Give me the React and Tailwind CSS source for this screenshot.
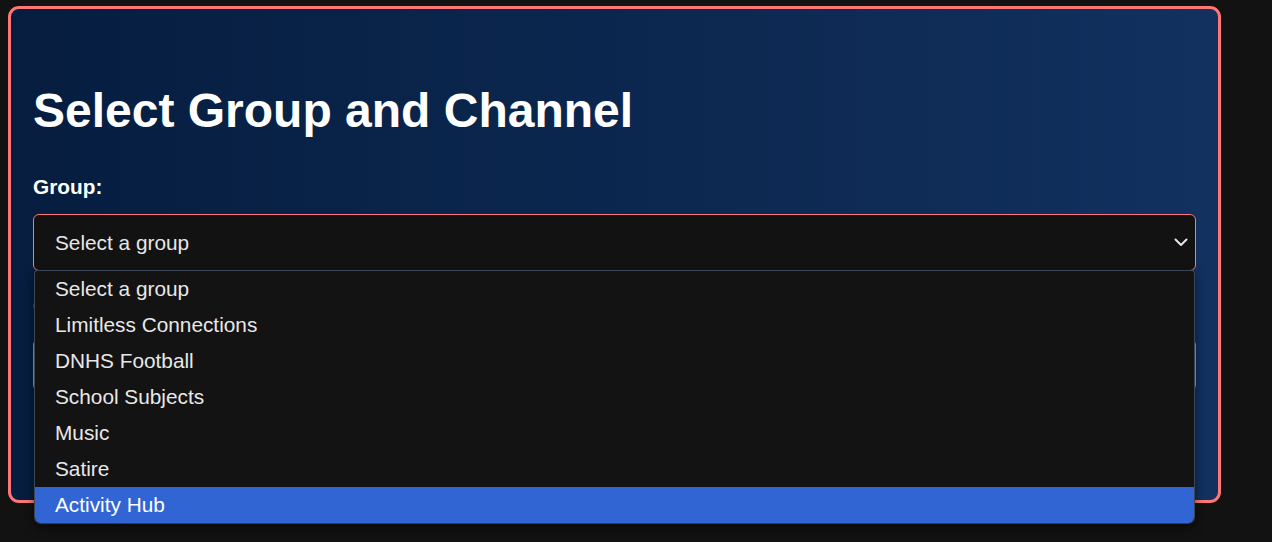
import React from "react";

const options = [
  "Select a group",
  "Limitless Connections",
  "DNHS Football",
  "School Subjects",
  "Music",
  "Satire",
  "Activity Hub",
];

function Chevron() {
  return (
    <svg width="14" height="9" viewBox="0 0 14 9" fill="none">
      <path d="M1.5 1.5 L7 7 L12.5 1.5" stroke="#e5e5e5" strokeWidth="2" strokeLinecap="round" strokeLinejoin="round" />
    </svg>
  );
}

export default function App() {
  return (
    <div
      className="min-h-[542px] w-full bg-[#121212] pl-[8px] pt-[6px]"
      style={{ fontFamily: '"Liberation Sans", Arial, sans-serif' }}
    >
      <div className="relative h-[497px] w-[1213px] rounded-[11px] border-[3px] border-[#ff7676] bg-gradient-to-r from-[#061d3f] to-[#12315f] px-[22px] pt-[78px]">
        <h1 className="m-0 text-[48px] font-bold leading-[48px] text-white">
          Select Group and Channel
        </h1>
        <label className="mt-[39px] block text-[20.8px] font-bold leading-[25px] text-white">
          Group:
        </label>
        <div className="relative mt-[15px]">
          <div className="flex h-[57px] w-[1163px] items-center justify-between rounded-[6px] border border-[#ff7676] bg-[#121212] pl-[21px] pr-[6px]">
            <span className="text-[20.8px] text-[#e6e6e6]">Select a group</span>
            <span className="mr-[1px] flex items-center">
              <Chevron />
            </span>
          </div>
          <label className="mt-[22px] block text-[20.8px] font-bold leading-[25px] text-white">
            Channel:
          </label>
          <div className="mt-[21px] h-[52px] w-[1163px] rounded-[6px] border border-[#ff7676] bg-[#121212]" />

          <div className="absolute left-[1px] top-[56px] z-10 w-[1161px] overflow-hidden rounded-b-[7px] rounded-t-[4px] border border-[#3b4656] border-b-[#3a3a3a] bg-[#131313] shadow-[0_4px_10px_rgba(0,0,0,0.5)]">
            {options.map((o, i) => (
              <div
                key={o}
                className={
                  i === options.length - 1
                    ? "flex h-[36px] items-center bg-[#3165d3] pl-[20px] text-[20.8px] text-white"
                    : "flex h-[36px] items-center pl-[20px] text-[20.8px] text-[#e8e8e8]"
                }
              >
                {o}
              </div>
            ))}
          </div>
        </div>
      </div>
    </div>
  );
}
